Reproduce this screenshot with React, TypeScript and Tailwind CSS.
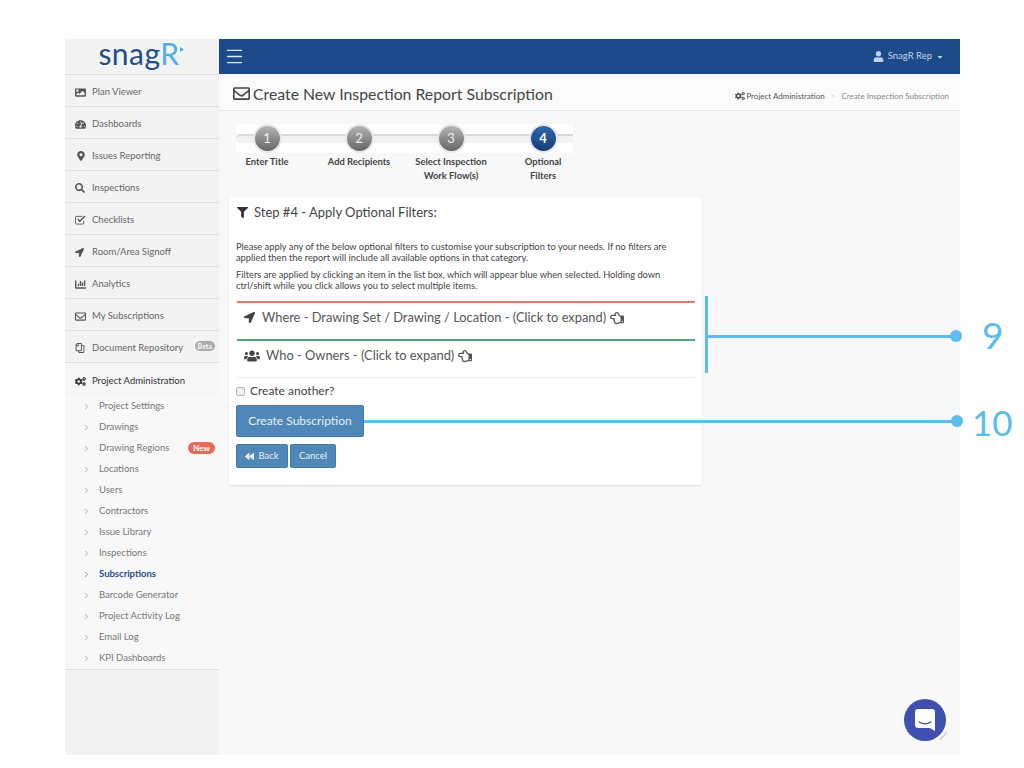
import React from "react";
import { ChevronRight, Menu } from "lucide-react";
import {
  FaBackward,
  FaCaretDown,
  FaChartBar,
  FaCogs,
  FaFilter,
  FaImage,
  FaLocationArrow,
  FaMapMarkerAlt,
  FaRegCopy,
  FaRegEnvelope,
  FaRegHandPointLeft,
  FaSearch,
  FaTachometerAlt,
  FaUser,
  FaUsers,
} from "react-icons/fa";

const CheckSquareIcon = ({ className }: { className?: string }) => (
  <svg viewBox="0 0 12 11" width="11" height="10" className={className} fill="none" stroke="currentColor">
    <path d="M9.500 6.500V9a1 1 0 0 1-1 1H1.500a1 1 0 0 1-1-1V2.500a1 1 0 0 1 1-1H8" strokeWidth="1" />
    <path d="M3 4.500l2.200 2.300L11 1" strokeWidth="1.600" />
  </svg>
);

const mainItems = [
  { label: "Plan Viewer", icon: <FaImage className="text-[11px]" /> },
  { label: "Dashboards", icon: <FaTachometerAlt className="text-[11px]" /> },
  { label: "Issues Reporting", icon: <FaMapMarkerAlt className="text-[10px] ml-[1px]" /> },
  { label: "Inspections", icon: <FaSearch className="text-[10px]" /> },
  { label: "Checklists", icon: <CheckSquareIcon /> },
  { label: "Room/Area Signoff", icon: <FaLocationArrow className="text-[9px]" /> },
  { label: "Analytics", icon: <FaChartBar className="text-[11px]" /> },
  { label: "My Subscriptions", icon: <FaRegEnvelope className="text-[11px]" /> },
  { label: "Document Repository", icon: <FaRegCopy className="text-[10px] -scale-x-100" />, badge: "Beta" },
];

const subItems = [
  "Project Settings",
  "Drawings",
  "Drawing Regions",
  "Locations",
  "Users",
  "Contractors",
  "Issue Library",
  "Inspections",
  "Subscriptions",
  "Barcode Generator",
  "Project Activity Log",
  "Email Log",
  "KPI Dashboards",
];

const steps = [
  { n: 1, label: "Enter Title", second: "" },
  { n: 2, label: "Add Recipients", second: "" },
  { n: 3, label: "Select Inspection", second: "Work Flow(s)" },
  { n: 4, label: "Optional", second: "Filters" },
];

const Sidebar = () => (
  <aside className="w-[154px] shrink-0 bg-[#f3f3f3] flex flex-col">
    <div className="h-[36px] flex items-center justify-center border-b border-[#dcdcdc] pr-[2px] pb-[7px]">
      <span className="text-[30px] leading-none tracking-[0.5px] text-[#1f4e8c]">
        snag<span className="text-[#4fb0e2]">R</span>
      </span>
      <svg width="4" height="5" viewBox="0 0 4 5" className="-mt-[8px]">
        <path d="M0 0l4 2.500L0 5z" fill="#4fb0e2" />
      </svg>
    </div>
    {mainItems.map(({ label, icon, badge }) => (
      <div
        key={label}
        className="h-[32px] flex items-center border-b border-[#dfdfdf] pl-[10px] pt-[3px] text-[9.5px] text-[#666] whitespace-nowrap"
      >
        <span className="w-[17px] flex shrink-0 text-[#555]">{icon}</span>
        <span>{label}</span>
        {badge && (
          <span className="ml-auto mr-[4px] -mt-[4px] rounded-full bg-[#aaa] px-[3px] text-[7px] leading-[10px] font-bold text-white">
            {badge}
          </span>
        )}
      </div>
    ))}
    <div className="h-[33px] flex items-center pl-[10px] pt-[3px] text-[9.5px] text-[#333] bg-[#f6f6f6]">
      <span className="w-[17px] flex shrink-0">
        <FaCogs className="text-[11px] text-[#333]" />
      </span>
      <span>Project Administration</span>
    </div>
    <div className="bg-[#f8f8f8] border-b border-[#dfdfdf]">
      {subItems.map((item) => {
        const active = item === "Subscriptions";
        return (
          <div
            key={item}
            className={`h-[21px] flex items-center pl-[17px] text-[9.5px] ${
              active ? "font-bold text-[#1f4e8c]" : "text-[#777]"
            }`}
          >
            <ChevronRight size={9} strokeWidth={1.5} className="mr-[8px] shrink-0" />
            <span>{item}</span>
            {item === "Drawing Regions" && (
              <span className="ml-auto mr-[4px] -mt-[1px] rounded-full bg-[#e8685a] px-[5px] text-[8px] leading-[12px] font-bold text-white">
                New
              </span>
            )}
          </div>
        );
      })}
    </div>
  </aside>
);

const TopBar = () => (
  <header className="h-[35px] bg-[#1c4a8b] flex items-center justify-between pl-[5px] pr-[16px] shrink-0">
    <Menu size={21} strokeWidth={1.5} className="text-[#dfe7f2]" />
    <div className="flex items-center text-[9.5px] text-[#c6d3e4]">
      <FaUser className="text-[11px] mr-[4px]" />
      <span>SnagR Rep</span>
      <FaCaretDown className="text-[8px] ml-[4px]" />
    </div>
  </header>
);

const PageHeader = () => (
  <div className="h-[37px] bg-[#fbfbfb] border-b border-[#e6e6e6] flex items-center justify-between pl-[14px] pr-[11px] pt-[3px] shrink-0">
    <div className="flex items-center text-[#444]">
      <FaRegEnvelope className="text-[17px] mr-[3px]" />
      <h1 className="text-[15.8px]">Create New Inspection Report Subscription</h1>
    </div>
    <div className="flex items-center text-[8px] pt-[5px]">
      <FaCogs className="text-[10px] text-[#555] mr-[1px]" />
      <span className="text-[#555]">Project Administration</span>
      <span className="text-[#ccc] mx-[6px]">&gt;</span>
      <span className="text-[#888]">Create Inspection Subscription</span>
    </div>
  </div>
);

const Stepper = () => (
  <div className="relative ml-[17px] mt-[13px] w-[337px]">
    <div className="absolute left-0 right-0 top-0 h-[29px] bg-white" />
    <div className="absolute left-0 right-0 top-[10px] h-[9px] rounded-l-full bg-[#f2f2f2] border-t-2 border-t-[#d8d8d8]" />
    <div className="relative flex -ml-[15px]">
      {steps.map(({ n, label, second }) => (
        <div key={n} className="w-[92px] flex flex-col items-center shrink-0">
          <div className="h-[29px] w-[29px] rounded-full bg-[#e8e8e8] flex items-center justify-center">
            <div
              className={`h-[25px] w-[25px] rounded-full flex items-center justify-center text-[13px] ${
                n === 4
                  ? "font-bold bg-gradient-to-b from-[#2f68ad] to-[#153e7a] text-white"
                  : "bg-gradient-to-b from-[#b5b5b5] to-[#666] text-[#eee]"
              }`}
            >
              {n}
            </div>
          </div>
          <div className="mt-[2px] text-[9.4px] leading-[14px] font-bold text-[#444] text-center whitespace-nowrap">
            <div>{label}</div>
            {second && <div>{second}</div>}
          </div>
        </div>
      ))}
    </div>
  </div>
);

const FilterRow = ({
  icon,
  text,
  accent,
  gap,
}: {
  icon: React.ReactNode;
  text: string;
  accent: "red" | "green";
  gap: string;
}) => (
  <div
    className={`h-[38px] flex items-center pl-[7px] pb-[7px] text-[12.85px] text-[#555] border-t-2 ${
      accent === "red" ? "border-t-[#e07a68]" : "border-t-[#55a67a]"
    }`}
  >
    <span className={`flex shrink-0 ${gap}`}>{icon}</span>
    <span>{text}</span>
    <FaRegHandPointLeft className="text-[14px] ml-[4px]" />
  </div>
);

const Card = () => (
  <section className="ml-[10px] mt-[14px] w-[473px] h-[288px] bg-white rounded-[3px] shadow-[0_1px_2px_rgba(0,0,0,0.12)] px-[7px] pt-[8px]">
    <div className="flex items-center text-[13px] text-[#444] h-[15px] pl-[1px]">
      <FaFilter className="text-[11px] text-[#333] mr-[6px]" />
      <span>Step #4 - Apply Optional Filters:</span>
    </div>
    <p className="mt-[22px] text-[9.3px] leading-[10.5px] text-[#444]">
      Please apply any of the below optional filters to customise your subscription to your needs. If no filters are
      applied then the report will include all available options in that category.
    </p>
    <p className="mt-[7px] text-[9.3px] leading-[10.5px] text-[#444]">
      Filters are applied by clicking an item in the list box, which will appear blue when selected. Holding down
      ctrl/shift while you click allows you to select multiple items.
    </p>
    <div className="mt-[10px] w-[458px] ml-[1px] rounded-b-[3px] shadow-[0_1px_1px_rgba(0,0,0,0.08)]">
      <FilterRow
        icon={<FaLocationArrow className="text-[11px] text-[#444]" />}
        text="Where - Drawing Set / Drawing / Location - (Click to expand)"
        accent="red"
        gap="mr-[7px]"
      />
      <FilterRow
        icon={<FaUsers className="text-[16px] text-[#444]" />}
        text="Who - Owners - (Click to expand)"
        accent="green"
        gap="mr-[6px]"
      />
    </div>
    <label className="mt-[7px] h-[14px] flex items-center text-[12px] text-[#444]">
      <input
        type="checkbox"
        className="appearance-none h-[9px] w-[9px] mr-[5px] rounded-[2px] border border-[#b5b5b5] bg-[#efefef]"
      />
      Create another?
    </label>
    <button className="block mt-[7px] w-[128px] h-[32px] rounded-[2px] bg-[#4f87b8] border border-[#4479a8] text-[12px] text-[#e8f0f7]">
      Create Subscription
    </button>
    <div className="mt-[7px] flex gap-[2px]">
      <button className="w-[52px] h-[24px] rounded-[2px] bg-[#4f87b8] border border-[#4479a8] text-[9.5px] text-[#e8f0f7] flex items-center justify-center">
        <FaBackward className="text-[9px] mr-[4px]" />
        Back
      </button>
      <button className="w-[46px] h-[24px] rounded-[2px] bg-[#4f87b8] border border-[#4479a8] text-[9.5px] text-[#e8f0f7]">
        Cancel
      </button>
    </div>
  </section>
);

const Annotations = () => (
  <>
    <div className="absolute left-[705px] top-[296px] h-[77px] w-[3px] bg-[#5bbcf0]" />
    <div className="absolute left-[707px] top-[335px] h-[3px] w-[249px] bg-[#5bbcf0]" />
    <div className="absolute left-[950px] top-[330px] h-[12px] w-[12px] rounded-full bg-[#5bbcf0]" />
    <div className="absolute left-[982px] top-[313px] text-[37px] leading-[44px] text-[#5bbcf0]">9</div>
    <div className="absolute left-[364px] top-[420px] h-[3px] w-[592px] bg-[#5bbcf0]" />
    <div className="absolute left-[951px] top-[415px] h-[12px] w-[12px] rounded-full bg-[#5bbcf0]" />
    <div className="absolute left-[972px] top-[400px] text-[35px] leading-[44px] text-[#5bbcf0]">10</div>
  </>
);

const ChatBubble = () => (
  <>
    <svg width="8" height="9" viewBox="0 0 8 9" className="absolute left-[939px] top-[731px]">
      <path d="M8 0v2L2 9H0z" fill="#c9c9c9" />
    </svg>
    <div className="absolute left-[904px] top-[699px] h-[42px] w-[42px] rounded-full bg-[#3f4fb0] flex items-center justify-center">
      <svg width="20" height="22" viewBox="0 0 20 22">
        <path d="M3 0h14a3 3 0 0 1 3 3v19l-5-3H3a3 3 0 0 1-3-3V3a3 3 0 0 1 3-3z" fill="#fff" />
        <path d="M4 13c3.500 2.200 8.500 2.200 12 0" fill="none" stroke="#3f4fb0" strokeWidth="1.300" strokeLinecap="round" />
      </svg>
    </div>
  </>
);

export default function App() {
  return (
    <div
      className="relative w-[1024px] h-[768px] overflow-hidden bg-white pt-[39px] pl-[65px] pb-[13px]"
      style={{ fontFamily: 'Lato, "Open Sans", sans-serif' }}
    >
      <div className="flex w-[895px] h-[716px]">
        <Sidebar />
        <main className="flex-1 flex flex-col bg-[#f8f8f8]">
          <TopBar />
          <PageHeader />
          <Stepper />
          <Card />
        </main>
      </div>
      <Annotations />
      <ChatBubble />
    </div>
  );
}
